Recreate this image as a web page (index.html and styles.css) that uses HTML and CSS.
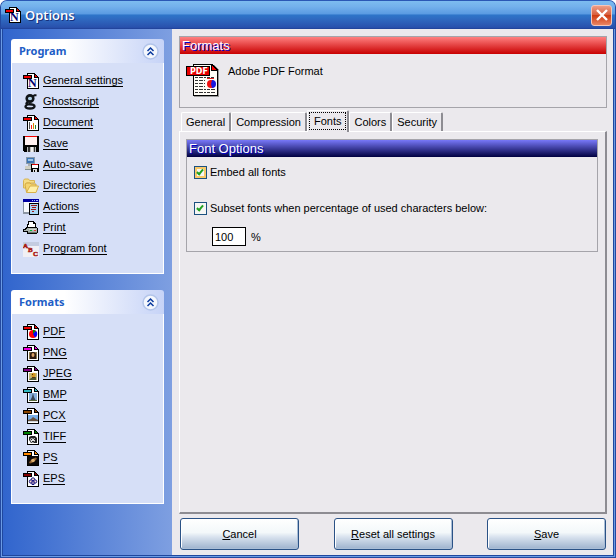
FILE: index.html
```
<!DOCTYPE html>
<html lang="en">
<head>
    <meta charset="UTF-8">
    <meta name="viewport" content="width=device-width, initial-scale=1.0">
    <title>Options</title>
    <link rel="stylesheet" href="styles.css">
</head>
<body>
    <!-- Shared icon shapes -->
    <svg class="icon-defs" aria-hidden="true">
        <symbol id="page" viewBox="0 0 16 16" shape-rendering="crispEdges">
            <path d="M4 0h8v1h1v1h1v1h1v1h1v12H4z" fill="#000"/>
            <path d="M5 1h6v4h4v10H5z" fill="#fff"/>
            <path d="M12 2h1v1h1v1h-2z" fill="currentColor"/>
            <path d="M0 2h9v4H0z" fill="#000"/>
            <path d="M1 3h7v2H1z" fill="currentColor"/>
        </symbol>
        <symbol id="chevrons" viewBox="0 0 17 17">
            <circle cx="8.500" cy="8.500" r="7.500" fill="#f4f7fd" stroke="#b3c5ea" stroke-width="1.500"/>
            <path d="M5.500 8l3-3 3 3M5.500 12l3-3 3 3" fill="none" stroke="#0b3a9e" stroke-width="1.500"/>
        </symbol>
    </svg>

    <div class="window">
        <header class="title-bar">
            <svg class="icon" viewBox="0 0 16 16"><use href="#page"/><text x="5" y="14" class="icon-letter">N</text></svg>
            <h1>Options</h1>
            <button type="button" class="close-button" aria-label="Close">
                <svg viewBox="0 0 12 12"><path d="M1 1l10 10M11 1L1 11" stroke="#fff" stroke-width="2.400"/></svg>
            </button>
        </header>

        <div class="content">
            <nav class="sidebar">
                <section class="side-panel">
                    <div class="side-header">
                        <h2>Program</h2>
                        <button type="button" class="collapse-button" aria-label="Collapse Program"><svg><use href="#chevrons"/></svg></button>
                    </div>
                    <ul class="side-list">
                        <li><a href="#general">
                            <svg class="icon" viewBox="0 0 16 16"><use href="#page"/><text x="5" y="14" class="icon-letter">N</text></svg>
                            <span>General settings</span></a></li>
                        <li><a href="#ghostscript">
                            <svg class="icon" viewBox="0 0 16 16">
                                <g fill="none" stroke="#101418">
                                    <ellipse cx="7" cy="4.500" rx="3.200" ry="3" stroke-width="2.800"/>
                                    <path d="M9.500 2.500l2-1.200h2" stroke-width="2"/>
                                    <path d="M5 7.500L3.500 9.500q0 1 3 .8 5 0 5 2 0 2.200-4.500 2.200-4.500 0-4.500-2 0-1 2-2" stroke-width="2.400"/>
                                </g>
                                <circle cx="7" cy="4.500" r="1.800" fill="#a9cde4"/>
                            </svg>
                            <span>Ghostscript</span></a></li>
                        <li><a href="#document">
                            <svg class="icon" viewBox="0 0 16 16" shape-rendering="crispEdges"><use href="#page"/>
                                <path d="M6 7h1v7H6z" fill="#555"/><path d="M8 10h1v4H8z" fill="#e22"/><path d="M10 8h1v6h-1z" fill="#d80"/><path d="M12 10h1v4h-1z" fill="#283"/></svg>
                            <span>Document</span></a></li>
                        <li><a href="#save">
                            <svg class="icon" viewBox="0 0 16 16" shape-rendering="crispEdges">
                                <path d="M0 0h16v16H1l-1-1z" fill="#000"/><path d="M2 1h12v8H2z" fill="#fff0f0"/><path d="M2 0h12v1H2z" fill="#f00000"/>
                                <path d="M4 11h9v5H4z" fill="#b8b8b8"/><path d="M5 11h2v5H5zM11 11h1v5h-1z" fill="#333"/><path d="M8 11h2v5H8z" fill="#eee"/></svg>
                            <span>Save</span></a></li>
                        <li><a href="#auto-save">
                            <svg class="icon" viewBox="0 0 16 16" shape-rendering="crispEdges">
                                <path d="M3 0h9v7H3z" fill="#8799a8"/><path d="M4 1h7v5H4z" fill="#3d74b5"/><path d="M5 2h5v2H5z" fill="#9cc4e5"/>
                                <path d="M5 7h5v2H5z" fill="#a9b0b4"/><path d="M2 9h8v4H2z" fill="#d0d0c4"/><path d="M2 12h7v1H2z" fill="#85908f"/>
                                <path d="M8 7h8v8H8z" fill="#000"/><path d="M9 8h6v3H9z" fill="#fff"/><path d="M9 7h6v1H9z" fill="#e00000"/><path d="M10 12h4v3h-4z" fill="#ddd"/><path d="M11 13h1v2h-1z" fill="#000"/></svg>
                            <span>Auto-save</span></a></li>
                        <li><a href="#directories">
                            <svg class="icon" viewBox="0 0 16 16">
                                <path d="M.5 2.500l1-1.500h4l1 1.500h5V5H4L2.500 10H.5z" fill="#f5dc85" stroke="#d8b452"/>
                                <path d="M3.500 14L2 7l1-2h4l1 1h5v3z" fill="#f4d470" stroke="#d3aa43"/>
                                <path d="M3.500 14.500L7 8h8.500L13 14.500z" fill="#fff0a8" stroke="#d9b14a"/></svg>
                            <span>Directories</span></a></li>
                        <li><a href="#actions">
                            <svg class="icon" viewBox="0 0 16 16" shape-rendering="crispEdges">
                                <path d="M0 0h16v15H0z" fill="#8c96a4"/><path d="M1 3h14v10H1z" fill="#f7fafd"/><path d="M0 0h16v3H0z" fill="#0000a0"/><path d="M9 1h1v1H9zM11 1h1v1h-1zM13 1h2v1h-2z" fill="#a9b7ff"/>
                                <path d="M6 4h10v12H6z" fill="#000"/><path d="M7 5h8v10H7z" fill="#abd7f5"/><path d="M8 6h6v1H8zM9 8h4v1H9zM8 10h5v1H8zM9 12h2v1H9z" fill="#a01818"/></svg>
                            <span>Actions</span></a></li>
                        <li><a href="#print">
                            <svg class="icon" viewBox="0 0 16 16" shape-rendering="crispEdges">
                                <path d="M5 1h6v1h1v1h1v5H4V4h1z" fill="#000"/><path d="M6 2h4v2h2v4H5V5h1z" fill="#fff"/>
                                <path d="M3 7h11v1h1v5h-1v1H4v-2H0V9h2V8h1z" fill="#000"/><path d="M4 8h10v4H5v-1H1v-1h2V9h1z" fill="#aab2ac"/><path d="M6 9h7v1H6z" fill="#d3d8d3"/><path d="M7 10h2v1H7z" fill="#00b830"/><path d="M11 10h2v1h-2z" fill="#e03030"/><path d="M5 12h9v1H5z" fill="#707770"/></svg>
                            <span>Print</span></a></li>
                        <li><a href="#program-font">
                            <svg class="icon" viewBox="0 0 16 16">
                                <path d="M0 1h16v15H0z" fill="#f1f0f5"/><path d="M0 1h16v4H0z" fill="#c4cce0"/>
                                <g class="abc-letters"><text x="0" y="7">A</text><text x="5" y="11">B</text><text x="10" y="15">C</text></g></svg>
                            <span>Program font</span></a></li>
                    </ul>
                </section>

                <section class="side-panel">
                    <div class="side-header">
                        <h2>Formats</h2>
                        <button type="button" class="collapse-button" aria-label="Collapse Formats"><svg><use href="#chevrons"/></svg></button>
                    </div>
                    <ul class="side-list">
                        <li><a href="#pdf">
                            <svg class="icon" viewBox="0 0 16 16"><use href="#page"/><circle cx="10" cy="10" r="4" fill="#f00"/><path d="M10 10V6a4 4 0 0 1 3 1z" fill="#080"/><path d="M10 10l3-3a4 4 0 0 1-1 6.500z" fill="#00f"/></svg>
                            <span>PDF</span></a></li>
                        <li><a href="#png">
                            <svg class="icon magenta" viewBox="0 0 16 16"><use href="#page"/><path d="M6 7h8v7H6z" fill="#8c7a4c"/><path d="M7 14V9q0-2 3-2t3 3v4z" fill="#2c1a10"/><ellipse cx="10" cy="10" rx="1.500" ry="2" fill="#d9a266"/></svg>
                            <span>PNG</span></a></li>
                        <li><a href="#jpeg">
                            <svg class="icon purple" viewBox="0 0 16 16"><use href="#page"/><path d="M6 7h8v7H6z" fill="#c4b878"/><circle cx="10.500" cy="9" r="2.200" fill="#d29a20"/><path d="M6 14l2-2 5-1v3z" fill="#4d5a34"/><path d="M9 8h1v1H9zM9 11h3v1H9z" fill="#593412"/></svg>
                            <span>JPEG</span></a></li>
                        <li><a href="#bmp">
                            <svg class="icon cyan" viewBox="0 0 16 16"><use href="#page"/><path d="M6 6h8v8H6z" fill="#86aeda"/><path d="M10 6l1 4 2 4H7l2-4z" fill="#3a4654"/><path d="M6 13h8v1H6z" fill="#54683c"/></svg>
                            <span>BMP</span></a></li>
                        <li><a href="#pcx">
                            <svg class="icon brown" viewBox="0 0 16 16"><use href="#page"/><path d="M5 7h10v7H5z" fill="#7ab0e8"/><path d="M5 12l3-1 2-2 3 2 2 1v1H5z" fill="#65503e"/><path d="M5 13h10v1H5z" fill="#ccd3da"/></svg>
                            <span>PCX</span></a></li>
                        <li><a href="#tiff">
                            <svg class="icon green" viewBox="0 0 16 16"><use href="#page"/><path d="M6 8l2-1h4l2 2v5H8l-2-3z" fill="#222"/><path d="M7 10l2-1 1 1 2-1v3l-2 2-2-1z" fill="#ddd"/><path d="M8 10h1v1H8zM11 10h1v1h-1zM9 12h2v1H9z" fill="#222"/></svg>
                            <span>TIFF</span></a></li>
                        <li><a href="#ps">
                            <svg class="icon orange" viewBox="0 0 16 16"><use href="#page"/><path d="M5 6h10v9H5z" fill="#0c0908"/><ellipse cx="10" cy="10.500" rx="4.500" ry="1.500" fill="#8b5d2d" transform="rotate(-35 10 10.500)"/><circle cx="10" cy="10.500" r="1.800" fill="#e0b070"/></svg>
                            <span>PS</span></a></li>
                        <li><a href="#eps">
                            <svg class="icon maroon" viewBox="0 0 16 16"><use href="#page"/><g fill="#fbd9cc" stroke="#101080"><circle cx="10" cy="8.500" r="1.700"/><circle cx="8" cy="10.500" r="1.700"/><circle cx="12" cy="10.500" r="1.700"/><path d="M9 10h2v3.500H9z"/></g></svg>
                            <span>EPS</span></a></li>
                    </ul>
                </section>
            </nav>

            <form class="main">
                <section class="group">
                    <h2 class="group-title red-title">Formats</h2>
                    <div class="format-info">
                        <svg class="format-icon" viewBox="0 0 33 33" shape-rendering="crispEdges">
                            <path d="M8 1h20l5 5v27H8z" fill="#999"/>
                            <path d="M7 0h19l6 6v26H7z" fill="#000"/>
                            <path d="M8 1h17v6h6v24H8z" fill="#fffdf7"/>
                            <path d="M26 2l4 4h-4z" fill="#f00"/>
                            <path d="M9 13.500h19M9 16.500h10M9 19.500h10M9 22.500h10M9 25.500h20M9 28.500h20" stroke="#333" stroke-dasharray="3 1 4 1 2 1"/>
                            <path d="M21 14.500h7" stroke="#e02020"/>
                            <g shape-rendering="auto"><circle cx="25" cy="20" r="4" fill="#f01010"/><path d="M25 20l1-4a4 4 0 0 1 0 8z" fill="#1818e0"/></g>
                            <path d="M0 2h24v10H0z" fill="#000"/>
                            <path d="M1 3h22v8H1z" fill="#e80000"/>
                            <text x="4" y="10" class="pdf-label">PDF</text>
                        </svg>
                        <span>Adobe PDF Format</span>
                    </div>
                </section>

                <div class="tabs" role="tablist">
                    <button type="button" role="tab" class="tab">General</button>
                    <button type="button" role="tab" class="tab">Compression</button>
                    <button type="button" role="tab" class="tab active" aria-selected="true"><span>Fonts</span></button>
                    <button type="button" role="tab" class="tab">Colors</button>
                    <button type="button" role="tab" class="tab">Security</button>
                </div>

                <div class="tab-panel" role="tabpanel">
                    <section class="group">
                        <h2 class="group-title blue-title">Font Options</h2>
                        <div class="font-options">
                            <label class="check-row"><input type="checkbox" class="hot" checked>Embed all fonts</label>
                            <label class="check-row"><input type="checkbox" checked>Subset fonts when percentage of used characters below:</label>
                            <div class="percent-row">
                                <input type="text" id="percent" value="100" aria-label="Percentage">
                                <label for="percent">%</label>
                            </div>
                        </div>
                    </section>
                </div>

                <div class="buttons">
                    <button type="button"><u>C</u>ancel</button>
                    <button type="button"><u>R</u>eset all settings</button>
                    <button type="submit"><u>S</u>ave</button>
                </div>
            </form>
        </div>
    </div>
</body>
</html>
```

FILE: styles.css
```
* {
    margin: 0;
    padding: 0;
    box-sizing: border-box;
}

body {
    font-family: "Liberation Sans", Arial, sans-serif;
    font-size: 11px;
    line-height: 14px;
    color: #000;
    background: #fff;
}

button,
input {
    font: inherit;
    color: inherit;
}

.icon-defs {
    position: absolute;
    width: 0;
    height: 0;
}

.window {
    display: flex;
    flex-direction: column;
    min-height: 100vh;
    border: 1px solid #2349a0;
    border-top-color: #2a57b5;
    border-radius: 7px 7px 0 0;
    background: #6b9be4;
    overflow: hidden;
}

/* Title bar */
.title-bar {
    display: flex;
    align-items: center;
    gap: 4px;
    height: 28px;
    padding: 0 3px 0 4px;
    background: linear-gradient(#7dbcf0 0%, #73b0ec 20%, #5b9be2 46%, #2e75c9 50%, #2f69c0 65%, #2951ad 94%, #1f3f96 100%);
}

.title-bar h1 {
    flex: 1;
    font-family: "Open Sans", "Noto Sans", sans-serif;
    font-size: 13px;
    font-weight: 600;
    line-height: 18px;
    color: #fff;
    text-shadow: 1px 1px #17307a;
}

.close-button {
    display: flex;
    align-items: center;
    justify-content: center;
    width: 21px;
    height: 21px;
    border: 1px solid #f5c5b8;
    border-radius: 3px;
    background: linear-gradient(#ec9d87, #d9603f 45%, #cf3c12 50%, #e88463);
}

.close-button svg {
    width: 12px;
    height: 12px;
}

.content {
    flex: 1;
    display: flex;
    margin: 0 1px 1px;
    border: solid #1f479e;
    border-width: 0 1px 1px;
    background: #ebe9ed;
}

/* Sidebar */
.sidebar {
    display: flex;
    flex-direction: column;
    gap: 16px;
    width: 169px;
    padding: 10px 8px;
    background: linear-gradient(90deg, #3165cd, #7e9fe1);
}

.side-header {
    display: flex;
    align-items: center;
    justify-content: space-between;
    height: 24px;
    padding: 0 5px 0 8px;
    border-radius: 3px 3px 0 0;
    background: linear-gradient(90deg, #fff 35%, #c6d3f7);
}

.side-header h2 {
    font-family: "Noto Sans", "Open Sans", sans-serif;
    font-size: 11px;
    font-weight: 700;
    color: #215dc6;
}

.collapse-button {
    width: 17px;
    height: 17px;
    border: 0;
    background: none;
}

.collapse-button svg {
    display: block;
    width: 17px;
    height: 17px;
}

.side-list {
    list-style: none;
    padding: 7px 11px 14px;
    border: 1px solid #fff;
    border-top: 0;
    background: #d6dff7;
}

.side-list a {
    display: flex;
    align-items: center;
    gap: 4px;
    height: 21px;
    color: #000;
    text-decoration: none;
}

.side-list span {
    line-height: 12px;
    border-bottom: 1px solid #000;
}

.icon {
    flex: none;
    width: 16px;
    height: 16px;
    color: #f00000;
}

.icon.magenta { color: #f000e0; }
.icon.purple { color: #800080; }
.icon.cyan { color: #30b8c0; }
.icon.brown { color: #884400; }
.icon.green { color: #008000; }
.icon.orange { color: #ff8800; }
.icon.maroon { color: #800000; }

.icon-letter {
    font-family: "Liberation Serif", serif;
    font-size: 12px;
    font-weight: 700;
    fill: #000070;
}

.abc-letters {
    font-family: "Liberation Serif", serif;
    font-size: 7px;
    font-weight: 700;
    fill: #d02010;
    stroke: #a01810;
    stroke-width: 0.500;
}

/* Main area */
.main {
    flex: 1;
    display: flex;
    flex-direction: column;
    min-width: 0;
    padding: 7px 6px 5px 7px;
}

.group {
    border: 1px solid #a5a4aa;
}

.group-title {
    height: 17px;
    padding-left: 2px;
    font-size: 13px;
    font-weight: 400;
    line-height: 17px;
    color: #fff;
    text-shadow: 1px 1px #0000c8;
}

.red-title {
    background: linear-gradient(#ff8080, #c80000);
}

.blue-title {
    background: linear-gradient(#7878f8, #000040);
}

.format-info {
    display: flex;
    gap: 9px;
    height: 53px;
    padding: 10px 6px;
}

.format-icon {
    width: 33px;
    height: 33px;
}

.pdf-label {
    font-family: "DejaVu Sans", sans-serif;
    font-size: 8px;
    font-weight: 700;
    fill: #fff;
}

/* Tabs */
.tabs {
    display: flex;
    align-items: flex-end;
    height: 23px;
    padding: 0 2px;
}

.tab {
    height: 19px;
    padding: 0 4px;
    border: solid #fff;
    border-width: 1px 2px 0 1px;
    border-right-color: #8d8c92;
    border-radius: 2px 2px 0 0;
    background: #ebe9ed;
}

.tab.active {
    height: 22px;
    padding: 0 1px 2px;
    margin-bottom: -1px;
    z-index: 1;
}

.tab.active span {
    display: block;
    padding: 1px 4px;
    border: 1px dotted #000;
}

.tab-panel {
    flex: 1;
    padding: 7px 7px 7px 6px;
    border: 1px solid #fff;
    border-right: 2px solid #8d8c92;
    border-bottom: 2px solid #8d8c92;
}

.font-options {
    display: flex;
    flex-direction: column;
    padding: 8px 7px 5px;
}

.check-row {
    display: flex;
    align-items: center;
    gap: 3px;
    height: 14px;
    margin-bottom: 22px;
}

.check-row:last-of-type {
    margin-bottom: 12px;
}

.check-row input {
    appearance: none;
    width: 13px;
    height: 13px;
    border: 1px solid #1c5180;
    background: #f6f6f4;
}

.check-row input.hot {
    box-shadow: inset 0 0 0 2px #f9c868;
}

.check-row input:checked::before {
    content: "";
    display: block;
    width: 2px;
    height: 5px;
    margin: 1px 0 0 3px;
    border: solid #21a121;
    border-width: 0 2px 2px 0;
    transform: rotate(40deg);
}

.percent-row {
    display: flex;
    align-items: center;
    gap: 5px;
    padding-left: 18px;
}

.percent-row input {
    width: 34px;
    height: 19px;
    padding: 0 2px;
    border: 1px solid #000;
    background: #fff;
}

/* Bottom buttons */
.buttons {
    display: flex;
    justify-content: space-between;
    padding: 4px 1px 0;
}

.buttons button {
    width: 119px;
    height: 32px;
    border: 1px solid #2a5286;
    border-radius: 3px;
    background: linear-gradient(#fff, #f3f8fa 45%, #d8e2ee 60%, #9db2cd);
    box-shadow: inset 1px 1px #fff, inset -1px -1px #a9bdd6;
}
```
